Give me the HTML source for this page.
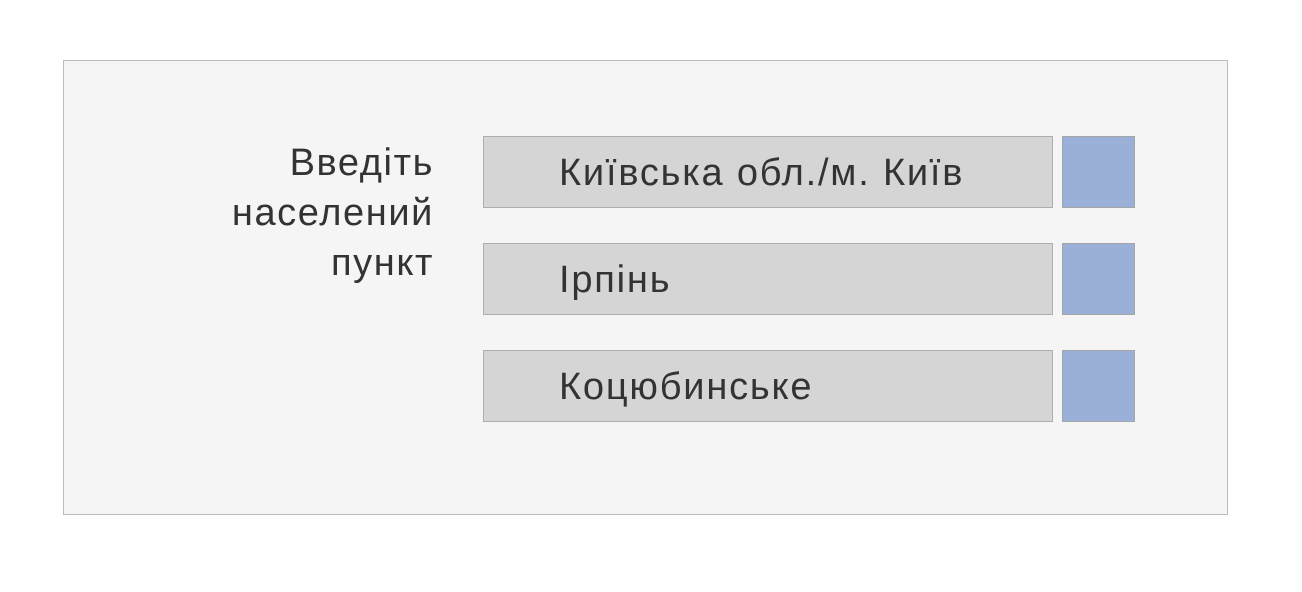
<!DOCTYPE html>
<html><head><meta charset="utf-8"><style>
body{margin:0;width:1302px;height:592px;background:#fff;font-family:"Liberation Sans",sans-serif;position:relative;overflow:hidden}
.outer{position:absolute;left:63px;top:60px;width:1163px;height:453px;background:#f5f5f5;border:1px solid #bcbcbc}
.lbl{position:absolute;right:868px;top:138px;text-align:right;font-size:38px;line-height:50px;color:#333;letter-spacing:1.6px}
.in{position:absolute;left:483px;width:568px;height:70px;background:#d5d5d5;border:1px solid #adadad}
.in span{position:absolute;left:75px;top:16px;font-size:38px;line-height:40px;color:#333;letter-spacing:1.8px}
.sq{position:absolute;left:1062px;width:71px;height:70px;background:#9bb0d8;border:1px solid #a5a5a5}
</style></head><body>
<div class="outer"></div>
<div class="lbl">Введіть<br>населений<br>пункт</div>
<div class="in" style="top:136px"><span>Київська обл./м. Київ</span></div>
<div class="sq" style="top:136px"></div>
<div class="in" style="top:243px"><span>Ірпінь</span></div>
<div class="sq" style="top:243px"></div>
<div class="in" style="top:350px"><span>Коцюбинське</span></div>
<div class="sq" style="top:350px"></div>
</body></html>
